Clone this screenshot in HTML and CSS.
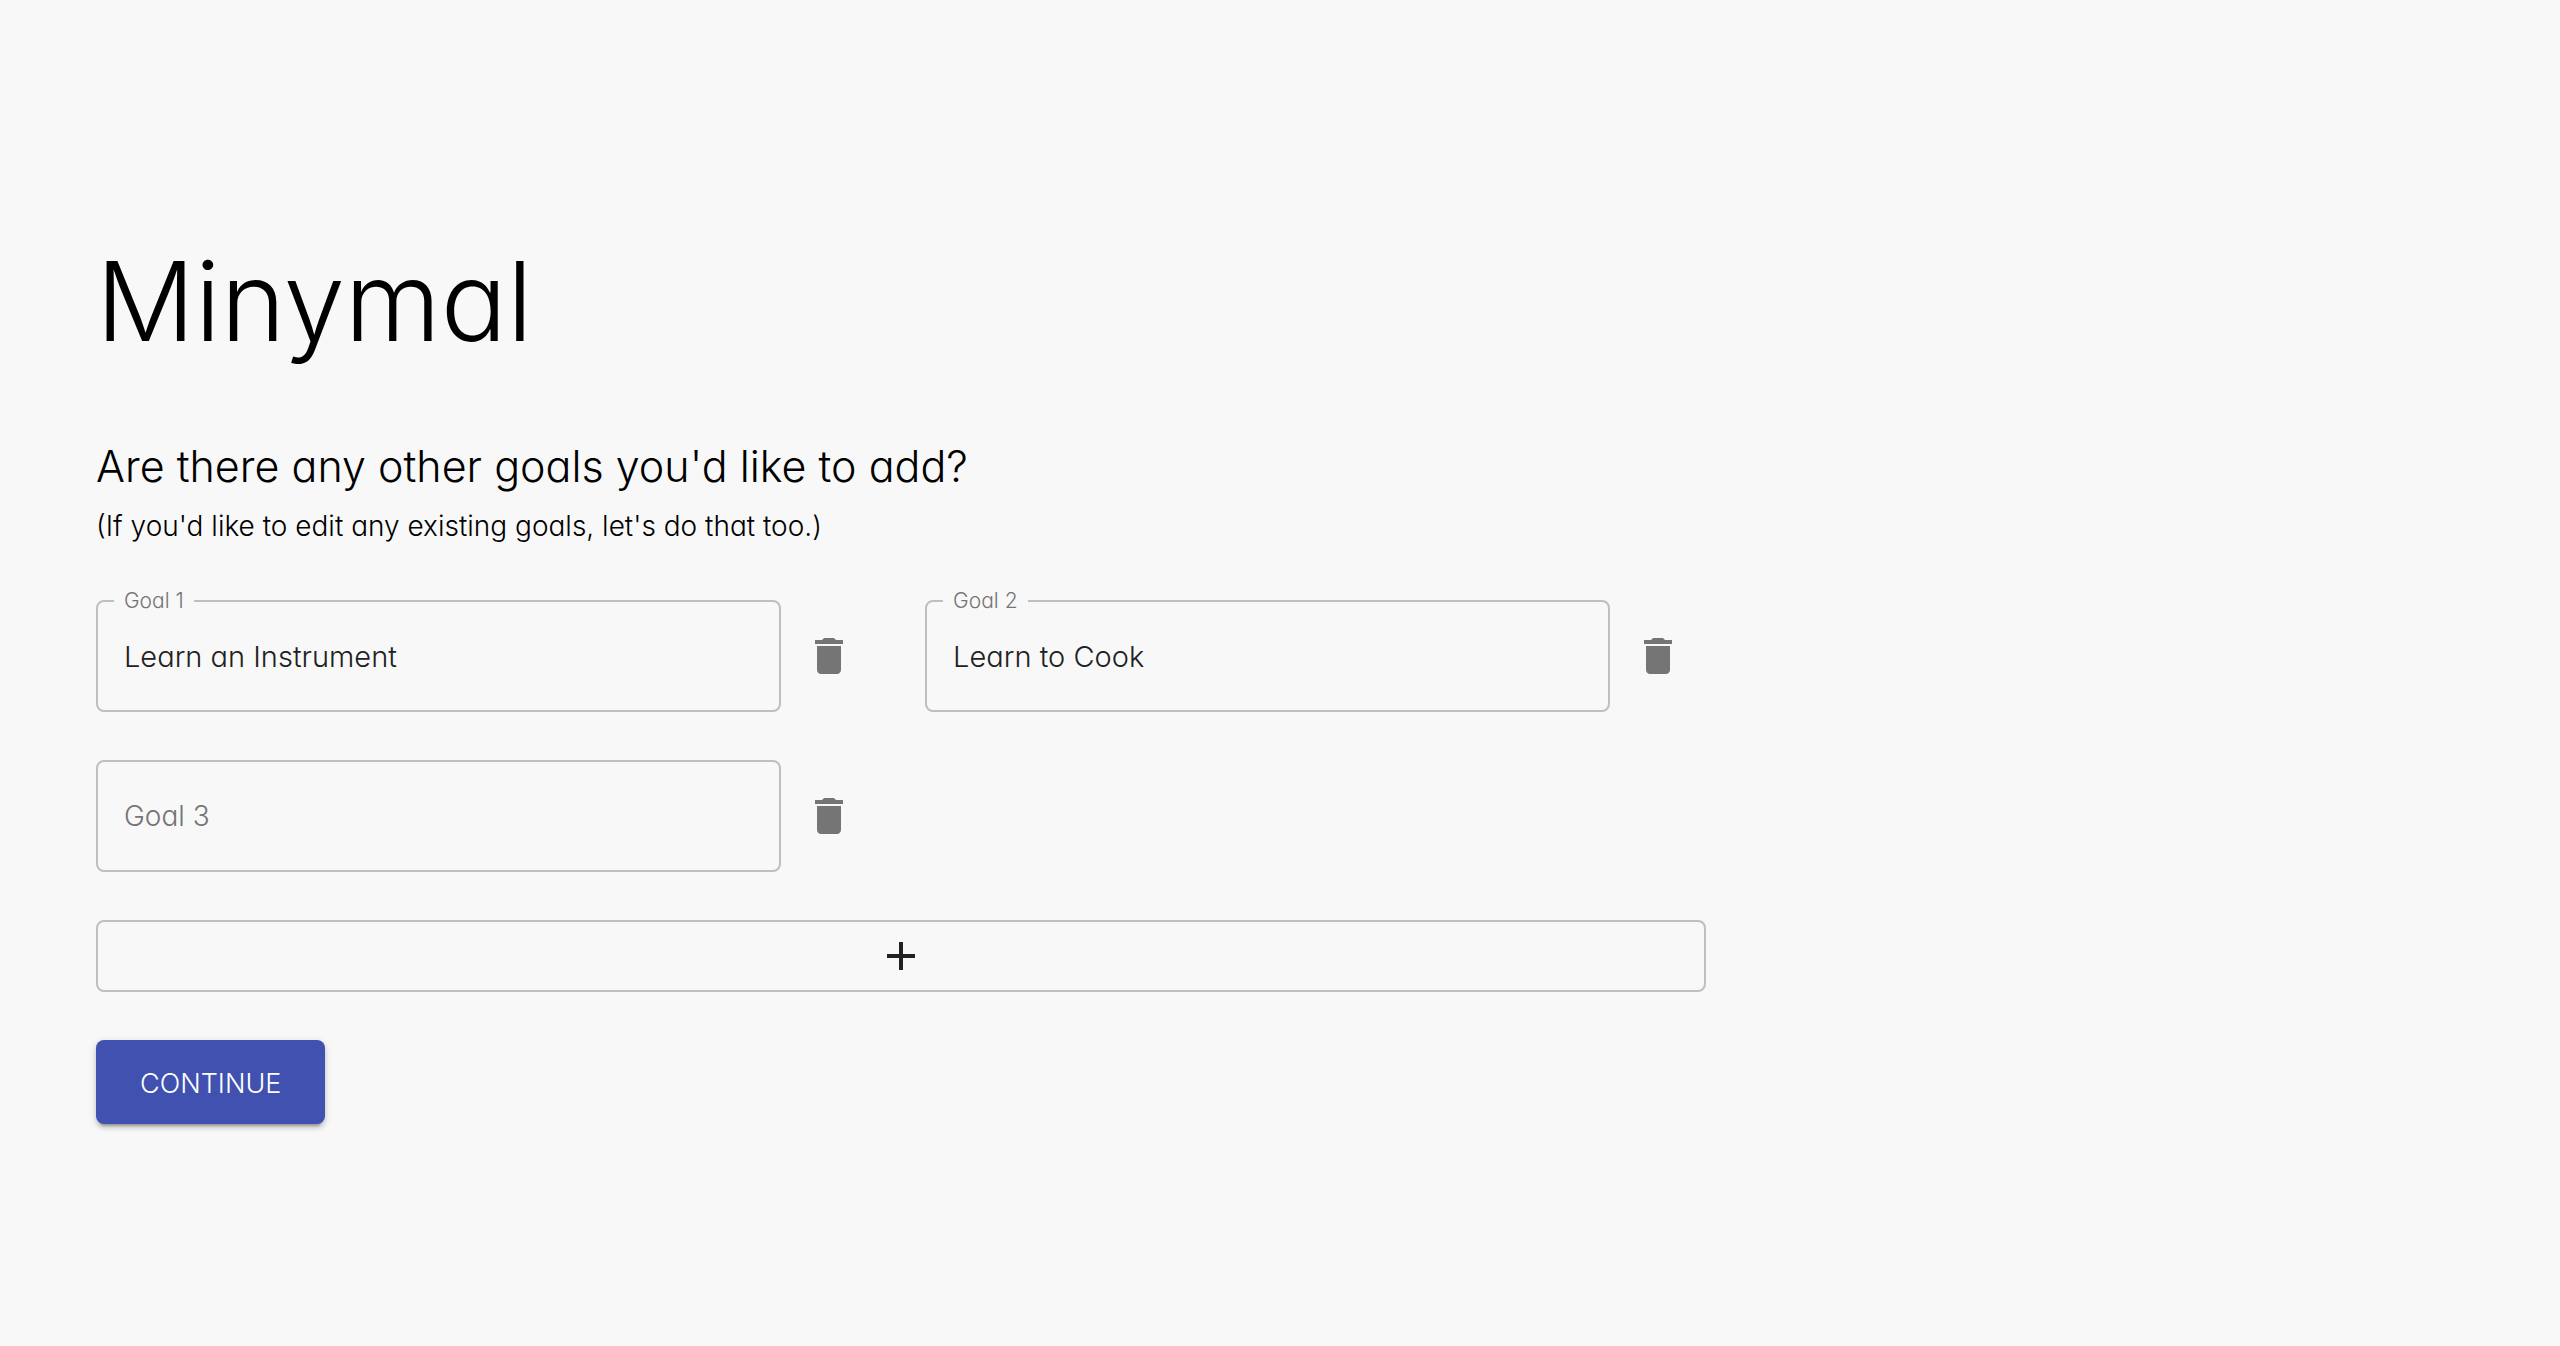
FILE: index.html
```html
<!DOCTYPE html>
<html lang="en">
<head>
<meta charset="utf-8">
<title>Minymal</title>
<link rel="stylesheet" href="styles.css">
</head>
<body>
<svg class="sprite" aria-hidden="true">
  <symbol id="trash" viewBox="0 0 24 24"><path d="M6 19c0 1.100.9 2 2 2h8c1.100 0 2-.9 2-2V7H6v12zM19 4h-3.500l-1-1h-5l-1 1H5v2h14V4z"/></symbol>
  <symbol id="plus" viewBox="0 0 24 24"><path d="M19 13h-6v6h-2v-6H5v-2h6V5h2v6h6v2z"/></symbol>
</svg>
<main class="page">
  <form class="content">
    <h1 class="title">Minymal</h1>
    <h2 class="question">Are there any other goals you'd like to add?</h2>
    <p class="hint">(If you'd like to edit any existing goals, let's do that too.)</p>
    <div class="goals">
      <div class="goal">
        <div class="field">
          <input class="field-input" id="goal1" type="text" value="Learn an Instrument">
          <label class="field-label field-label-raised" for="goal1">Goal 1</label>
        </div>
        <button class="delete" type="button" aria-label="Delete goal 1"><svg class="icon"><use href="#trash"/></svg></button>
      </div>
      <div class="goal">
        <div class="field">
          <input class="field-input" id="goal2" type="text" value="Learn to Cook">
          <label class="field-label field-label-raised" for="goal2">Goal 2</label>
        </div>
        <button class="delete" type="button" aria-label="Delete goal 2"><svg class="icon"><use href="#trash"/></svg></button>
      </div>
      <div class="goal">
        <div class="field">
          <input class="field-input" id="goal3" type="text">
          <label class="field-label" for="goal3">Goal 3</label>
        </div>
        <button class="delete" type="button" aria-label="Delete goal 3"><svg class="icon"><use href="#trash"/></svg></button>
      </div>
    </div>
    <button class="add" type="button" aria-label="Add a goal"><svg class="icon"><use href="#plus"/></svg></button>
    <button class="continue" type="submit">CONTINUE</button>
  </form>
</main>
</body>
</html>
```
FILE: styles.css
```css
* {
  box-sizing: border-box;
}

body {
  margin: 0;
  background: #f8f8f8;
  color: #000;
  font-family: Inter, "Open Sans", sans-serif;
  font-weight: 300;
  font-feature-settings: "cv11";
}

button,
input {
  font: inherit;
  font-feature-settings: inherit;
  margin: 0;
}

.sprite {
  position: absolute;
  width: 0;
  height: 0;
}

.page {
  display: flex;
  flex-direction: column;
  justify-content: center;
  min-height: 100vh;
  padding: 0 96px;
}

.content {
  display: flex;
  flex-direction: column;
  align-items: flex-start;
  width: 68%;
}

.title {
  margin: 0 0 58px;
  font-size: 110px;
  line-height: 158px;
  font-weight: inherit;
}

.question {
  margin: 0 0 8px;
  font-size: 43px;
  line-height: 56px;
  font-weight: inherit;
}

.hint {
  margin: 0 0 50px;
  font-size: 28px;
  line-height: 48px;
}

.goals {
  display: grid;
  grid-template-columns: 1fr 1fr;
  gap: 48px;
  width: 100%;
}

.goal {
  display: flex;
  align-items: center;
}

.field {
  position: relative;
  flex: 1;
}

.field-input {
  display: block;
  width: 100%;
  height: 112px;
  padding: 0 26px;
  border: 2px solid #bfbfbf;
  border-radius: 8px;
  background: transparent;
  color: #212121;
  font-size: 29px;
}

.field-label {
  position: absolute;
  top: 36px;
  left: 18px;
  padding: 0 10px;
  background: #f8f8f8;
  color: #757575;
  font-size: 28px;
  line-height: 40px;
}

.field-label-raised {
  top: -15px;
  font-size: 21px;
  line-height: 32px;
}

.delete {
  display: flex;
  justify-content: center;
  width: 96px;
  padding: 24px 0;
  border: 0;
  background: none;
  color: #757575;
}

.icon {
  width: 48px;
  height: 48px;
  fill: currentColor;
}

.add {
  display: flex;
  align-items: center;
  justify-content: center;
  width: 100%;
  height: 72px;
  margin: 48px 0;
  border: 2px solid #bfbfbf;
  border-radius: 8px;
  background: none;
  color: #212121;
}

.continue {
  height: 84px;
  padding: 2px 44px 0;
  border: 0;
  border-radius: 8px;
  background: #4051b0;
  color: #fff;
  font-size: 27px;
  box-shadow: 0 6px 2px -4px rgba(0, 0, 0, .2), 0 4px 4px 0 rgba(0, 0, 0, .14), 0 2px 10px 0 rgba(0, 0, 0, .12);
}
```
